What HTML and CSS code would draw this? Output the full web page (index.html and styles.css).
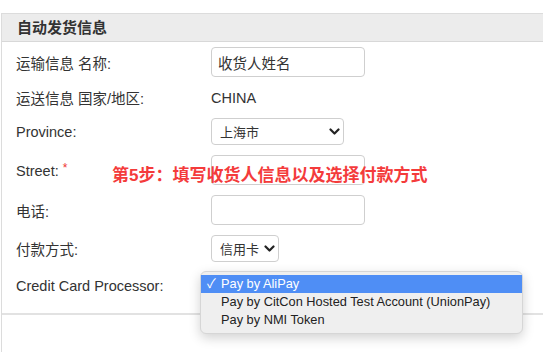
FILE: index.html
```html
<!DOCTYPE html>
<html lang="zh-CN">
<head>
    <meta charset="UTF-8">
    <meta name="viewport" content="width=device-width, initial-scale=1.0">
    <title>自动发货信息</title>
    <link rel="stylesheet" href="styles.css">
</head>
<body>
    <div class="panel">
        <div class="panel-heading">自动发货信息</div>
        <div class="panel-body">
            <div class="row">
                <label>运输信息 名称:</label>
                <div class="field"><input type="text" class="input" value="收货人姓名"></div>
            </div>
            <div class="row row-text">
                <label>运送信息 国家/地区:</label>
                <div class="field">CHINA</div>
            </div>
            <div class="row">
                <label>Province:</label>
                <div class="field">
                    <div class="select province">
                        <span>上海市</span>
                        <svg width="11" height="8" viewBox="0 0 11 8"><path d="M1.5 1.5 L5.5 5.5 L9.5 1.5" fill="none" stroke="#222" stroke-width="2.2" stroke-linecap="round" stroke-linejoin="round"/></svg>
                    </div>
                </div>
            </div>
            <div class="row">
                <label>Street: <sup class="req">*</sup></label>
                <div class="field"><input type="text" class="input"></div>
            </div>
            <div class="row">
                <label>电话:</label>
                <div class="field"><input type="text" class="input"></div>
            </div>
            <div class="row">
                <label>付款方式:</label>
                <div class="field">
                    <div class="select pay">
                        <span>信用卡</span>
                        <svg width="11" height="8" viewBox="0 0 11 8"><path d="M1.5 1.5 L5.5 5.5 L9.5 1.5" fill="none" stroke="#222" stroke-width="2.2" stroke-linecap="round" stroke-linejoin="round"/></svg>
                    </div>
                </div>
            </div>
            <div class="row">
                <label>Credit Card Processor:</label>
                <div class="field">
                    <div class="select processor"></div>
                    <ul class="menu">
                        <li class="active"><span class="check">✓</span>Pay by AliPay</li>
                        <li><span class="check"></span>Pay by CitCon Hosted Test Account (UnionPay)</li>
                        <li><span class="check"></span>Pay by NMI Token</li>
                    </ul>
                </div>
            </div>

            <div class="note">第5步：填写收货人信息以及选择付款方式</div>
        </div>
        <div class="panel-footer"></div>
    </div>
</body>
</html>
```

FILE: styles.css
```css
* {
    margin: 0;
    padding: 0;
    box-sizing: border-box;
}

body {
    font-family: "Liberation Sans", "Noto Sans CJK SC", sans-serif;
    font-size: 14.5px;
    color: #333;
    background: #fff;
    overflow: hidden;
    height: 352px;
}

.panel {
    margin: 13px 0 0 1px;
    border: 1px solid #dcdcdc;
    border-right: none;
    border-bottom: none;
    height: 339px;
}

.panel-heading {
    height: 28px;
    line-height: 27px;
    padding-left: 15px;
    background: #ececec;
    border-bottom: 1px solid #d8d8d8;
    font-size: 15px;
    font-weight: bold;
}

.panel-body {
    position: relative;
    padding: 5px 0 14px 14px;
    display: flex;
    flex-direction: column;
    gap: 10px;
    border-bottom: 2px solid #e2e2e2;
}

.row {
    display: flex;
    align-items: center;
    min-height: 20px;
}

.row label {
    width: 195px;
    flex: none;
}

.req {
    color: #e33;
    font-size: 12px;
    vertical-align: 4px;
}

.field {
    position: relative;
}

.input {
    width: 154px;
    height: 30px;
    border: 1px solid #cfcfcf;
    border-radius: 4px;
    padding: 0 6px;
    font: inherit;
    color: #333;
    outline: none;
}

.select {
    height: 27px;
    border: 1px solid #cfcfcf;
    border-radius: 4px;
    background: #fff;
    display: flex;
    align-items: center;
    justify-content: space-between;
    padding: 0 3px 0 8px;
    font-size: 13px;
    white-space: nowrap;
}

.province {
    width: 133px;
}

.pay {
    width: 68px;
}

.processor {
    width: 100px;
}

.menu {
    position: absolute;
    left: -11px;
    top: -1px;
    width: 323px;
    padding: 3px 0 4px;
    list-style: none;
    background: #efefef;
    border: 1px solid #d6d6d6;
    border-radius: 6px;
    box-shadow: 0 4px 12px rgba(0, 0, 0, 0.18);
    font-size: 12.8px;
    color: #222;
}

.menu li {
    height: 18px;
    line-height: 18px;
    display: flex;
    align-items: center;
    white-space: nowrap;
}

.menu li.active {
    background: #4f8ef5;
    color: #fff;
}

.check {
    width: 20px;
    padding-left: 6px;
    flex: none;
}

.note {
    position: absolute;
    left: 110px;
    top: 124px;
    line-height: 20px;
    font-size: 17px;
    font-weight: bold;
    color: #f43b3b;
}
```
